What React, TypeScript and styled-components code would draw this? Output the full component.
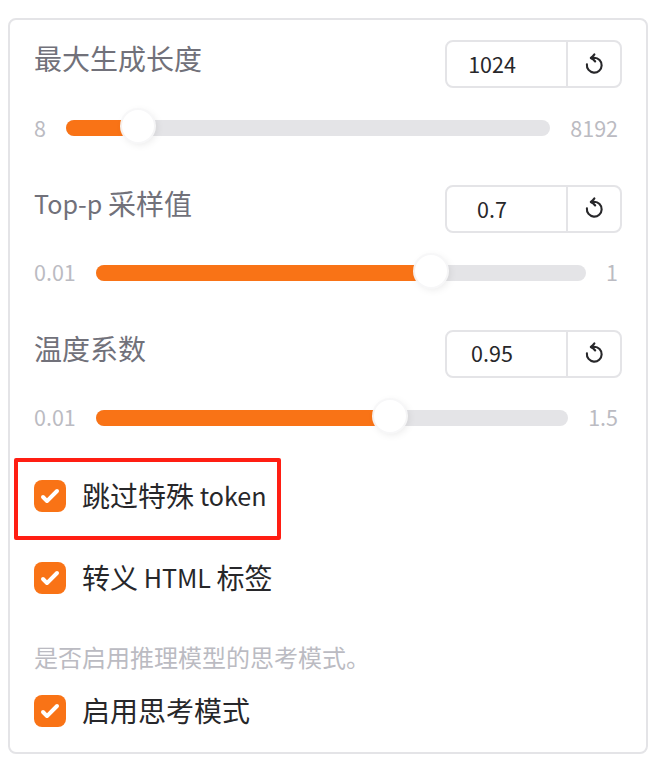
import React from 'react';
import styled, { createGlobalStyle } from 'styled-components';

const GlobalStyle = createGlobalStyle`
  * { box-sizing: border-box; }
  body {
    margin: 0;
    background: #fff;
    font-family: 'Noto Sans CJK SC', 'Noto Sans', sans-serif;
  }
`;

const Panel = styled.main`
  width: 640px;
  height: 736px;
  margin: 18px 0 0 8px;
  padding: 20px 24px 0;
  border: 2px solid #e4e4e7;
  border-radius: 8px;
  background: #fff;
`;

const SliderBlock = styled.section`
  height: 145px;
`;

const Header = styled.div`
  display: flex;
  justify-content: space-between;
  align-items: flex-start;
`;

const Label = styled.span`
  height: 36px;
  line-height: 36px;
  font-size: 28px;
  color: #71717a;
  white-space: pre;
`;

/* Latin glyphs run larger than the CJK ones at the same size */
const Latin = styled.span`
  font-size: 25.1px;
  line-height: 1;
  vertical-align: 1px;
`;

const ValueBox = styled.div`
  display: flex;
  width: 177px;
  height: 48px;
  border: 2px solid #e4e4e7;
  border-radius: 8px;
`;

const Value = styled.div<{ $line: number }>`
  width: 119px;
  padding-right: 29px;
  font-size: 21.5px;
  line-height: ${(p) => p.$line}px;
  text-align: center;
  color: #27272a;
`;

const Reset = styled.button<{ $drop: number }>`
  width: 54px;
  margin: 0;
  padding: ${(p) => p.$drop}px 0 0 16px;
  border: 0;
  border-left: 2px solid #e4e4e7;
  background: none;
  display: flex;
  align-items: flex-start;
`;

const TrackRow = styled.div`
  display: flex;
  align-items: center;
  height: 32px;
  margin-top: 24px;
  padding-right: 4px;
`;

const Bound = styled.span<{ $lift: number }>`
  padding-bottom: ${(p) => p.$lift}px;
  font-size: 21.5px;
  line-height: 30px;
  color: #bbbbc2;
`;

const Track = styled.div`
  position: relative;
  flex: 1;
  height: 16px;
  margin: 0 20px;
  border-radius: 8px;
  background: #e4e4e7;
`;

const Fill = styled.div<{ $width: number }>`
  width: ${(p) => p.$width}px;
  height: 16px;
  border-radius: 8px 0 0 8px;
  background: #f97316;
`;

const Thumb = styled.div<{ $x: number }>`
  position: absolute;
  top: -10px;
  left: ${(p) => p.$x - 16}px;
  width: 32px;
  height: 32px;
  border-radius: 50%;
  background: #fff;
  box-shadow: 0 0 0 2px rgba(247, 247, 248, 0.95), 2px 2px 8px rgba(0, 0, 0, 0.1);
`;

const CheckRow = styled.label<{ $gap: number }>`
  display: flex;
  align-items: center;
  gap: 16px;
  height: 32px;
  margin-top: ${(p) => p.$gap}px;
`;

const Box = styled.span`
  display: flex;
  width: 32px;
  height: 32px;
  border-radius: 8px;
  background: #f97316;
`;

const CheckText = styled.span`
  padding-bottom: 2px;
  font-size: 28px;
  line-height: 32px;
  color: #27272a;
  white-space: pre;
`;

const Highlighted = styled.div`
  position: relative;
`;

const Highlight = styled.div`
  position: absolute;
  left: -20px;
  top: -22px;
  width: 267px;
  height: 82px;
  border: 4px solid #ff1e13;
  border-radius: 2px;
`;

const Hint = styled.p`
  margin: 46px 0 0;
  height: 36px;
  line-height: 34px;
  font-size: 24px;
  color: #bbbbc2;
`;

const ResetIcon = () => (
  <svg width="22" height="24" viewBox="0 0 22 24" fill="none" stroke="#27272a" strokeWidth="2.1">
    <path d="M2.9 12.4A7.4 7.4 0 1 0 10.2 5.8L7.4 6.1" strokeLinecap="round" />
    <path d="M10.4 2.4Q9 4.6 6.8 6Q9.4 7.2 11.2 9.5" strokeLinecap="round" strokeLinejoin="round" />
  </svg>
);

const Check = () => (
  <Box>
    <svg width="32" height="32" viewBox="0 0 16 16" fill="#fff">
      <path d="M12.207 4.793a1 1 0 010 1.414l-5 5a1 1 0 01-1.414 0l-2-2a1 1 0 011.414-1.414L6.5 9.086l4.293-4.293a1 1 0 011.414 0z" />
    </svg>
  </Box>
);

interface SliderProps {
  label: React.ReactNode;
  value: string;
  min: string;
  max: string;
  fill: number;
  valueLine: number;
  iconDrop: number;
  lift: number;
}

const Slider = (p: SliderProps) => (
  <SliderBlock>
    <Header>
      <Label>{p.label}</Label>
      <ValueBox>
        <Value $line={p.valueLine}>{p.value}</Value>
        <Reset $drop={p.iconDrop} aria-label="reset"><ResetIcon /></Reset>
      </ValueBox>
    </Header>
    <TrackRow>
      <Bound $lift={p.lift}>{p.min}</Bound>
      <Track>
        <Fill $width={p.fill} />
        <Thumb $x={p.fill} />
      </Track>
      <Bound $lift={p.lift}>{p.max}</Bound>
    </TrackRow>
  </SliderBlock>
);

export default function App() {
  return (
    <>
      <GlobalStyle />
      <Panel>
        <Slider label="最大生成长度" value="1024" min="8" max="8192" fill={72} valueLine={44} iconDrop={10} lift={0} />
        <Slider label={<><Latin>Top-p </Latin>采样值</>} value="0.7" min="0.01" max="1" fill={335} valueLine={44} iconDrop={9} lift={2} />
        <Slider label="温度系数" value="0.95" min="0.01" max="1.5" fill={294} valueLine={42} iconDrop={9} lift={2} />
        <Highlighted>
          <CheckRow $gap={5}>
            <Check />
            <CheckText>跳过特殊<Latin> token</Latin></CheckText>
          </CheckRow>
          <Highlight />
        </Highlighted>
        <CheckRow $gap={50}>
          <Check />
          <CheckText>转义<Latin> HTML </Latin>标签</CheckText>
        </CheckRow>
        <Hint>是否启用推理模型的思考模式。</Hint>
        <CheckRow $gap={19}>
          <Check />
          <CheckText>启用思考模式</CheckText>
        </CheckRow>
      </Panel>
    </>
  );
}
